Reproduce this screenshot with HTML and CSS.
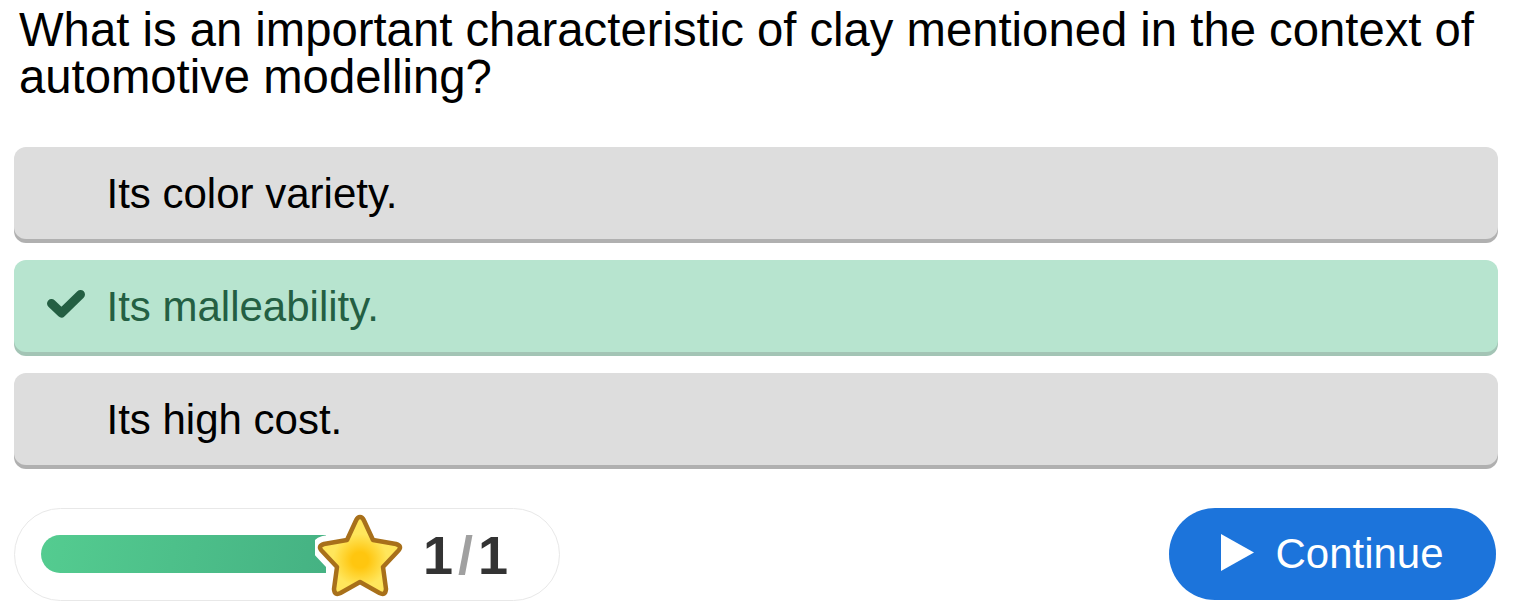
FILE: index.html
```html
<!DOCTYPE html>
<html>
  <head>
    <meta charset="utf-8">
    <title>Quiz</title>
    <link rel="stylesheet" href="styles.css">
  </head>
  <body>
    <h1 class="question">What is an important characteristic of clay mentioned in the context of automotive modelling?</h1>

    <div class="options">
      <div class="option">
        <span class="option-mark"></span>
        <span>Its color variety.</span>
      </div>
      <div class="option correct">
        <span class="option-mark">
          <svg class="check" width="38" height="28" viewBox="0 0 38 28">
            <path d="M4.500 13.500 L14.500 23 L33.500 4.500" fill="none" stroke="#245f43" stroke-width="9" stroke-linecap="round" stroke-linejoin="round"/>
          </svg>
        </span>
        <span>Its malleability.</span>
      </div>
      <div class="option">
        <span class="option-mark"></span>
        <span>Its high cost.</span>
      </div>
    </div>

    <div class="footer">
      <div class="progress">
        <div class="bar"></div>
        <svg class="star" width="90" height="86" viewBox="0 0 90 86">
          <defs>
            <radialGradient id="starfill" cx="50%" cy="56%" r="34%">
              <stop offset="0.3" stop-color="#ffc60f"/>
              <stop offset="1" stop-color="#ffe65c"/>
            </radialGradient>
          </defs>
          <path class="star-halo" d="M45 4 Q47.500 4 49 7.500 L58 27 L81 31 Q87.500 33 83.500 37.500 L68 54 L71 76 Q70.500 83 64.500 80 L45 69 L25.500 80 Q19.500 83 19 76 L22 54 L6.500 37.500 Q2.500 33 9 31 L32 27 L41 7.500 Q42.500 4 45 4 Z"/>
          <path class="star-shape" fill="url(#starfill)" d="M45 4 Q47.500 4 49 7.500 L58 27 L81 31 Q87.500 33 83.500 37.500 L68 54 L71 76 Q70.500 83 64.500 80 L45 69 L25.500 80 Q19.500 83 19 76 L22 54 L6.500 37.500 Q2.500 33 9 31 L32 27 L41 7.500 Q42.500 4 45 4 Z"/>
        </svg>
        <div class="count">1<span class="slash">/</span>1</div>
      </div>

      <button class="continue">
        <svg class="play" width="33" height="37" viewBox="0 0 33 37">
          <path d="M0 0 L33 18.500 L0 37 Z" fill="#fff"/>
        </svg>
        Continue
      </button>
    </div>
  </body>
</html>
```

FILE: styles.css
```css
body {
  margin: 0;
  padding: 6px 15px 0 14px;
  font-family: "Liberation Sans", Arial, sans-serif;
  background: #fff;
}
.question {
  margin: 0 0 47px 5px;
  font-size: 47.25px;
  line-height: 47px;
  font-weight: normal;
  color: #000;
}
.options {
  display: flex;
  flex-direction: column;
  gap: 21px;
}
.option {
  display: flex;
  align-items: center;
  height: 92px;
  box-sizing: border-box;
  padding-top: 2px;
  border-radius: 12px;
  background: #dddddd;
  box-shadow: 0 4px 0 #b0b0b0;
  font-size: 42px;
  color: #000;
}
.option-mark {
  display: flex;
  width: 92.500px;
  padding-left: 33px;
  box-sizing: border-box;
}
.check {
  margin-bottom: 6px;
}
.correct {
  background: #b7e4cf;
  box-shadow: 0 4px 0 #a3c4b5;
  color: #245f43;
}
.footer {
  display: flex;
  justify-content: space-between;
  align-items: flex-start;
  margin-top: 43px;
}
.progress {
  position: relative;
  display: flex;
  align-items: center;
  width: 546px;
  height: 93px;
  box-sizing: border-box;
  padding-left: 26px;
  border: 1px solid #e8e8e8;
  border-radius: 47px;
}
.bar {
  width: 285px;
  height: 38px;
  margin-top: -1px;
  border-radius: 19px 0 0 19px;
  background: linear-gradient(100deg, #54cc90, #45b283);
}
.star {
  position: absolute;
  left: 300px;
  top: 4px;
}
.star-halo {
  fill: #fff;
  stroke: #fff;
  stroke-width: 16;
  stroke-linejoin: round;
}
.star-shape {
  stroke: #a8701a;
  stroke-width: 4.5;
  stroke-linejoin: round;
}
.count {
  margin-left: 97px;
  font-size: 54px;
  font-weight: bold;
  color: #333;
}
.slash {
  padding: 0 5px;
  color: #a0a0a0;
}
.continue {
  display: flex;
  align-items: center;
  justify-content: center;
  gap: 21px;
  width: 327px;
  height: 92px;
  margin-right: 2px;
  border: none;
  border-radius: 46px;
  background: #1c74db;
  color: #fff;
  font-family: inherit;
  font-size: 42px;
}
.play {
  margin-bottom: 3px;
}
```
